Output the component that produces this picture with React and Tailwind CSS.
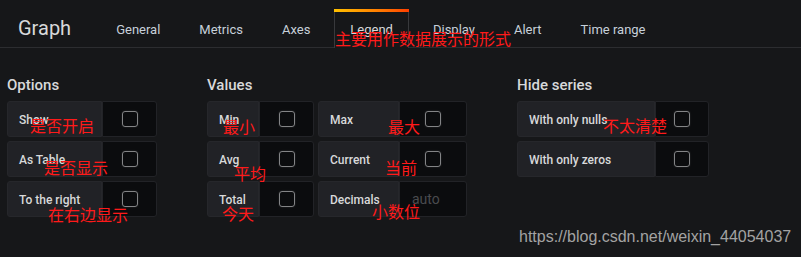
import React from 'react';

const tabs = ['General', 'Metrics', 'Axes', 'Legend', 'Display', 'Alert', 'Time range'];

function Check() {
    return <span className="block w-4 h-4 rounded-[3px] border border-[#838486] shadow-[0_0_2px_rgba(255,255,255,0.15)]" />;
}

function Field({ label, labelW, boxW, children }) {
    return (
        <div className="flex h-9">
            <div
                className="flex items-center pl-[11px] pt-px bg-[#212226] border border-[#26272b] rounded-l-[3px] text-[12px] font-medium text-[#d8d9da]"
                style={{ width: labelW }}
            >
                {label}
            </div>
            <div
                className="flex items-center justify-center bg-[#0b0c0e] border border-[#222327] rounded-r-[3px]"
                style={{ width: boxW }}
            >
                {children || <Check />}
            </div>
        </div>
    );
}

function Note({ text, className }) {
    return (
        <span className={`absolute text-[16px] leading-none text-[#ff1a1a] whitespace-nowrap pointer-events-none ${className}`}>
            {text}
        </span>
    );
}

export default function App() {
    return (
        <div
            className="relative w-[801px] h-[257px] overflow-hidden bg-[#161719] text-[#d8d9da]"
            style={{ fontFamily: 'Roboto, "Noto Sans CJK SC", sans-serif' }}
        >
            {/* Header with tabs */}
            <div className="flex items-end h-12 border-b border-[#2c2d30]">
                <div className="self-center pl-[18px] pr-[29px] text-[20px] leading-none text-[#d8d9da] pt-[8px]">Graph</div>
                <div className="flex gap-[7px] -mb-px">
                    {tabs.map((t) => (
                        <div
                            key={t}
                            className={
                                t === 'Legend'
                                    ? 'relative flex items-center h-[39px] px-[15px] ml-px mr-px text-[13px] text-[#d8d9da] bg-[#161719] border-l border-r border-[#38393c]'
                                    : 'flex items-center h-[39px] px-4 text-[13px] text-[#c7d0d9]'
                            }
                        >
                            {t === 'Legend' && (
                                <span className="absolute -left-px -right-px top-0 h-[3px] bg-gradient-to-r from-[#ffc000] to-[#ff3d00]" />
                            )}
                            <span className="pt-[2px]">{t}</span>
                        </div>
                    ))}
                </div>
            </div>

            {/* Options */}
            <div className="flex gap-[50px] pl-[7px] pt-[25px]">
                <div className="flex flex-col gap-1">
                    <div className="h-6 leading-6 text-[15px] font-medium text-[#d8d9da]">Options</div>
                    <Field label="Show" labelW={95} boxW={55} />
                    <Field label="As Table" labelW={95} boxW={55} />
                    <Field label="To the right" labelW={95} boxW={55} />
                </div>

                <div className="flex flex-col gap-1">
                    <div className="h-6 leading-6 text-[15px] font-medium text-[#d8d9da]">Values</div>
                    <div className="flex gap-1">
                        <div className="flex flex-col gap-1">
                            <Field label="Min" labelW={52} boxW={55} />
                            <Field label="Avg" labelW={52} boxW={55} />
                            <Field label="Total" labelW={52} boxW={55} />
                        </div>
                        <div className="flex flex-col gap-1">
                            <Field label="Max" labelW={81} boxW={68} />
                            <Field label="Current" labelW={81} boxW={68} />
                            <Field label="Decimals" labelW={81} boxW={68}>
                                <span className="w-full pl-3 text-[14px] text-[#4a4b4e]">auto</span>
                            </Field>
                        </div>
                    </div>
                </div>

                <div className="flex flex-col gap-1">
                    <div className="h-6 leading-6 text-[15px] font-medium text-[#d8d9da]">Hide series</div>
                    <Field label="With only nulls" labelW={138} boxW={54} />
                    <Field label="With only zeros" labelW={138} boxW={54} />
                </div>
            </div>

            {/* annotations */}
            <Note text="主要用作数据展示的形式" className="left-[335px] top-[32px]" />
            <Note text="是否开启" className="left-[30px] top-[119px]" />
            <Note text="是否显示" className="left-[44px] top-[161px]" />
            <Note text="在右边显示" className="left-[48px] top-[208px]" />
            <Note text="最小" className="left-[223px] top-[120px]" />
            <Note text="平均" className="left-[234px] top-[167px]" />
            <Note text="今天" className="left-[222px] top-[207px]" />
            <Note text="最大" className="left-[388px] top-[120px]" />
            <Note text="当前" className="left-[385px] top-[161px]" />
            <Note text="小数位" className="left-[372px] top-[205px]" />
            <Note text="不太清楚" className="left-[603px] top-[119px]" />

            <span
                className="absolute left-[519px] top-[227px] text-[16px] leading-[20px] text-[#a3a3a3]"
                style={{ fontFamily: '"Liberation Sans", Arial, sans-serif' }}
            >
                https://blog.csdn.net/weixin_44054037
            </span>
        </div>
    );
}
